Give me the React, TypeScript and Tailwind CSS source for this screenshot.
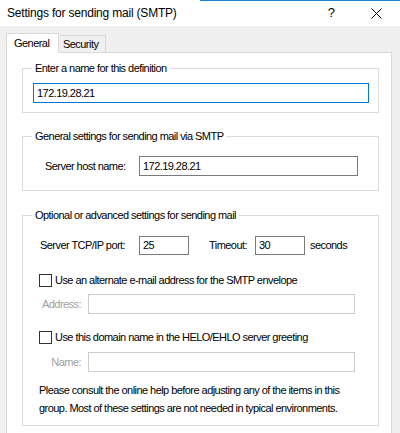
import React from "react";

const GroupBox = ({
  title,
  className,
  children,
}: {
  title: string;
  className: string;
  children: React.ReactNode;
}) => (
  <div className={`relative ml-[15px] w-[357px] border border-[#dcdcdc] ${className}`}>
    {/* legend sits over the top border */}
    <span className="absolute left-[9px] top-[-8px] bg-white px-[3px] leading-[14px] whitespace-nowrap">
      {title}
    </span>
    {children}
  </div>
);

const TextBox = ({
  value = "",
  className,
}: {
  value?: string;
  className: string;
}) => (
  <div className={`h-[20px] bg-white pl-[3px] flex items-center ${className}`}>
    {value}
  </div>
);

const CheckBox = () => (
  <div className="w-[13px] h-[13px] border border-[#333333] bg-white shrink-0" />
);

export default function App() {
  return (
    <div className="relative w-[400px] h-[433px] overflow-hidden bg-[#f0f0f0] text-black font-['Liberation_Sans',Arial,sans-serif] text-[11px] tracking-[-0.55px]">
      {/* window accent line */}
      <div className="absolute top-0 left-[200px] right-0 h-px bg-[#1883d7]" />

      {/* Title bar */}
      <div className="h-[26px] bg-white flex items-center pl-[7px] pr-[18px]">
        <span className="text-[12px] tracking-[-0.2px] pb-px">
          Settings for sending mail (SMTP)
        </span>
        <span className="ml-auto text-[13px] tracking-normal pb-px">?</span>
        <svg className="ml-[36px]" width="11" height="11" viewBox="0 0 11 11">
          <path d="M0.5 0.5 L10.5 10.5 M10.5 0.5 L0.5 10.5" stroke="#000" strokeWidth="1" />
        </svg>
      </div>

      {/* Tabs */}
      <div className="flex items-end pl-[6px] pt-[7px]">
        <div className="relative z-10 -mb-px h-[20px] w-[53px] bg-white border border-b-0 border-[#d9d9d9] pl-[7px] flex items-center">
          General
        </div>
        <div className="h-[17px] w-[47px] bg-[#f0f0f0] border border-l-0 border-b-0 border-[#d9d9d9] pl-[4px] flex items-center">
          Security
        </div>
      </div>

      {/* Tab panel */}
      <div className="ml-[6px] w-[386px] h-[400px] bg-white border border-[#d9d9d9] pt-[15px]">
        <GroupBox title="Enter a name for this definition" className="h-[45px] pt-[14px]">
          <TextBox value="172.19.28.21" className="ml-[10px] w-[336px] border border-[#0078d7]" />
        </GroupBox>

        <GroupBox title="General settings for sending mail via SMTP" className="mt-[23px] h-[55px] pt-[19px]">
          <div className="flex items-center pl-[22px]">
            <span className="w-[94px]">Server host name:</span>
            <TextBox value="172.19.28.21" className="w-[219px] border border-[#7a7a7a]" />
          </div>
        </GroupBox>

        <GroupBox title="Optional or advanced settings for sending mail" className="mt-[24px] h-[211px] pt-[20px]">
          <div className="flex items-center pl-[17px]">
            <span className="w-[99px]">Server TCP/IP port:</span>
            <TextBox value="25" className="w-[50px] !h-[19px] border border-[#7a7a7a]" />
            <span className="ml-[20px] w-[46px]">Timeout:</span>
            <TextBox value="30" className="w-[50px] !h-[19px] border border-[#7a7a7a]" />
            <span className="ml-[5px]">seconds</span>
          </div>

          <div className="mt-[19px] h-[13px] flex items-center pl-[16px]">
            <CheckBox />
            <span className="ml-[3px] whitespace-nowrap">
              Use an alternate e-mail address for the SMTP envelope
            </span>
          </div>

          <div className="mt-[7px] flex items-center">
            <span className="w-[65px] pr-[7px] text-right text-[#a0a0a0]">Address:</span>
            <TextBox className="w-[267px] border border-[#cccccc]" />
          </div>

          <div className="mt-[17px] h-[13px] flex items-center pl-[16px]">
            <CheckBox />
            <span className="ml-[3px] whitespace-nowrap">
              Use this domain name in the HELO/EHLO server greeting
            </span>
          </div>

          <div className="mt-[8px] flex items-center">
            <span className="w-[65px] pr-[7px] text-right text-[#a0a0a0]">Name:</span>
            <TextBox className="w-[267px] border border-[#cccccc]" />
          </div>

          <p className="mt-[9px] pl-[16px] leading-[18px] whitespace-nowrap">
            Please consult the online help before adjusting any of the items in this
            <br />
            group. Most of these settings are not needed in typical environments.
          </p>
        </GroupBox>
      </div>
    </div>
  );
}
